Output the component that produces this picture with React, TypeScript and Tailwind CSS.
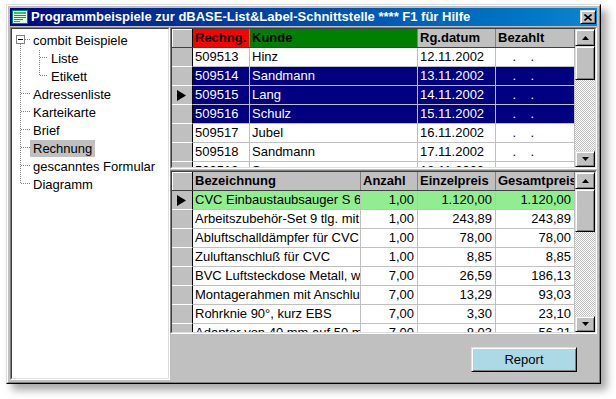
import React from "react";

const font = "font-['Liberation_Sans',Arial,sans-serif]";

type Col = { w: string; head: string; headBg?: string; right?: boolean };

const upperCols: Col[] = [
  { w: "w-[57px]", head: "Rechng.", headBg: "bg-[#ff0000]" },
  { w: "w-[168px]", head: "Kunde", headBg: "bg-[#008000]" },
  { w: "w-[78px]", head: "Rg.datum" },
  { w: "w-[79px]", head: "Bezahlt" },
];

const upperRows = [
  { cells: ["509513", "Hinz", "12.11.2002", "    .    ."] },
  { cells: ["509514", "Sandmann", "13.11.2002", "    .    ."], sel: true },
  { cells: ["509515", "Lang", "14.11.2002", "    .    ."], sel: true, cur: true },
  { cells: ["509516", "Schulz", "15.11.2002", "    .    ."], sel: true },
  { cells: ["509517", "Jubel", "16.11.2002", "    .    ."] },
  { cells: ["509518", "Sandmann", "17.11.2002", "    .    ."] },
  { cells: ["509519", "Sauer", "18.11.2002", "    .    ."] },
];

const lowerCols: Col[] = [
  { w: "w-[168px]", head: "Bezeichnung" },
  { w: "w-[57px]", head: "Anzahl", right: true },
  { w: "w-[78px]", head: "Einzelpreis", right: true },
  { w: "w-[79px]", head: "Gesamtpreis", right: true },
];

const lowerRows = [
  { cells: ["CVC Einbaustaubsauger S 6", "1,00", "1.120,00", "1.120,00"], green: true, cur: true },
  { cells: ["Arbeitszubehör-Set 9 tlg. mit", "1,00", "243,89", "243,89"] },
  { cells: ["Abluftschalldämpfer für CVC", "1,00", "78,00", "78,00"] },
  { cells: ["Zuluftanschluß für CVC", "1,00", "8,85", "8,85"] },
  { cells: ["BVC Luftsteckdose Metall, w", "7,00", "26,59", "186,13"] },
  { cells: ["Montagerahmen mit Anschlu", "7,00", "13,29", "93,03"] },
  { cells: ["Rohrknie 90°, kurz EBS", "7,00", "3,30", "23,10"] },
  { cells: ["Adapter von 40 mm auf 50 m", "7,00", "8,03", "56,21"] },
];

const tree = [
  { label: "combit Beispiele", child: false },
  { label: "Liste", child: true },
  { label: "Etikett", child: true },
  { label: "Adressenliste", child: false },
  { label: "Karteikarte", child: false },
  { label: "Brief", child: false },
  { label: "Rechnung", child: false, sel: true },
  { label: "gescanntes Formular", child: false },
  { label: "Diagramm", child: false },
];

const raised =
  "border border-t-[#dfdfdf] border-l-[#dfdfdf] border-r-black border-b-black shadow-[inset_1px_1px_#ffffff,inset_-1px_-1px_#808080]";

function Sunken({ className, children }: { className: string; children: React.ReactNode }) {
  return (
    <div className={`border border-t-[#808080] border-l-[#808080] border-r-white border-b-white ${className}`}>
      <div className="h-full w-full border border-t-[#404040] border-l-[#404040] border-r-[#dfdfdf] border-b-[#dfdfdf]">
        {children}
      </div>
    </div>
  );
}

function Arrow({ up }: { up?: boolean }) {
  return (
    <svg width="7" height="4" viewBox="0 0 7 4">
      <polygon points={up ? "3.5,0 7,4 0,4" : "0,0 7,0 3.5,4"} fill="black" />
    </svg>
  );
}

function Pointer() {
  return (
    <svg width="9" height="11" viewBox="0 0 9 11">
      <polygon points="0,0 9,5.5 0,11" fill="black" />
    </svg>
  );
}

function Scrollbar({ thumb }: { thumb: string }) {
  return (
    <div className="flex w-[20px] shrink-0 flex-col">
      <div className={`flex h-[17px] items-center justify-center bg-[#c0c0c0] ${raised}`}>
        <Arrow up />
      </div>
      <div className={`${thumb} bg-[#c0c0c0] ${raised}`} />
      <div className="flex-1 bg-[repeating-conic-gradient(#c0c0c0_0_25%,#ffffff_0_50%)] bg-[length:2px_2px]" />
      <div className={`flex h-[16px] items-center justify-center bg-[#c0c0c0] ${raised}`}>
        <Arrow />
      </div>
    </div>
  );
}

type Row = { cells: string[]; sel?: boolean; cur?: boolean; green?: boolean };

function Grid({ cols, rows, thumb, height }: { cols: Col[]; rows: Row[]; thumb: string; height: string }) {
  return (
    <Sunken className={`${height} w-[427px]`}>
      <div className="flex h-full bg-white">
        <div className="w-[403px] overflow-hidden">
          <div className="flex h-[19px] border-b border-b-[#404040] bg-[#c0c0c0]">
            <div className="w-[21px] shrink-0 border-r border-r-black shadow-[inset_1px_1px_#ffffff]" />
            {cols.map((c) => (
              <div
                key={c.head}
                className={`${c.w} shrink-0 overflow-hidden whitespace-nowrap border-r border-r-[#808080] px-[2px] font-bold leading-[18px] ${c.headBg ?? "bg-[#c0c0c0]"}`}
              >
                {c.head}
              </div>
            ))}
          </div>
          {rows.map((r, i) => (
            <div key={i} className="flex h-[19px]">
              <div className="flex w-[21px] shrink-0 items-center border-r border-b border-r-black border-b-white bg-[#c0c0c0] pl-[5px]">
                {r.cur ? <Pointer /> : null}
              </div>
              {cols.map((c, j) => (
                <div
                  key={j}
                  className={`${c.w} shrink-0 overflow-hidden whitespace-pre border-r border-b border-[#c0c0c0] leading-[18px] ${
                    c.right ? "pr-[3px] text-right" : "pl-[2px]"
                  } ${r.sel ? "bg-[#000080] text-white" : r.green ? "bg-[#90ee90]" : "bg-white"}`}
                >
                  {r.cells[j]}
                </div>
              ))}
            </div>
          ))}
        </div>
        <Scrollbar thumb={thumb} />
      </div>
    </Sunken>
  );
}

function TreeLines() {
  const stubs = [3, 4, 5, 6, 7, 8].map((i) => 10.5 + 18 * i);
  return (
    <svg className="pointer-events-none absolute left-0 top-0" width="40" height="170" shapeRendering="crispEdges">
      <g stroke="#808080" strokeDasharray="1 1" fill="none">
        <line x1="8.5" y1="15" x2="8.5" y2="155" />
        <line x1="13" y1="10.5" x2="18" y2="10.5" />
        {stubs.map((y) => (
          <line key={y} x1="9" y1={y} x2="18" y2={y} />
        ))}
        <line x1="27.5" y1="21" x2="27.5" y2="47" />
        <line x1="28" y1="28.5" x2="36" y2="28.5" />
        <line x1="28" y1="46.5" x2="36" y2="46.5" />
      </g>
      <rect x="4.5" y="6.5" width="8" height="8" fill="white" stroke="#808080" />
      <line x1="6" y1="10.5" x2="11" y2="10.5" stroke="black" />
    </svg>
  );
}

function AppIcon() {
  return (
    <svg width="16" height="14" viewBox="0 0 16 14">
      <rect x="0" y="0" width="16" height="14" fill="#008080" />
      <rect x="1" y="1" width="14" height="12" fill="#e0ffe0" />
      <rect x="2" y="2" width="12" height="2" fill="#40c060" />
      <rect x="2" y="5" width="12" height="1" fill="#00a040" />
      <rect x="2" y="7" width="12" height="1" fill="#00a040" />
      <rect x="2" y="9" width="9" height="1" fill="#00a040" />
      <rect x="2" y="11" width="6" height="1" fill="#808080" />
    </svg>
  );
}

export default function App() {
  return (
    <div className={`min-h-screen bg-white pl-[6px] pt-[4px] text-[13px] text-black ${font}`}>
      <div className="h-[380px] w-[595px] border border-t-[#dfdfdf] border-l-[#dfdfdf] border-r-black border-b-black shadow-[6px_6px_8px_rgba(0,0,0,0.35)]">
        <div className="flex h-full flex-col border border-t-white border-l-white border-r-[#808080] border-b-[#808080] bg-[#c0c0c0] p-[2px]">
          <div className="flex h-[18px] items-center bg-gradient-to-r from-[#000080] to-[#1084d0] pl-[2px] pr-[1px]">
            <AppIcon />
            <span className="ml-[3px] flex-1 whitespace-nowrap text-[13px] font-bold leading-[18px] text-white">
              Programmbeispiele zur dBASE-List&amp;Label-Schnittstelle **** F1 für Hilfe
            </span>
            <div className={`flex h-[14px] w-[16px] items-center justify-center bg-[#c0c0c0] ${raised}`}>
              <svg width="8" height="7" viewBox="0 0 8 7">
                <path d="M0.5 0.5 L7.5 6.5 M7.5 0.5 L0.5 6.5" stroke="black" strokeWidth="1.6" />
              </svg>
            </div>
          </div>

          <div className="mt-[1px] flex flex-1">
            <Sunken className="h-full w-[160px]">
              <div className="relative h-full bg-white pt-[2px]">
                <TreeLines />
                {tree.map((t) => (
                  <div key={t.label} className="flex h-[18px] items-center">
                    <span
                      className={`${t.child ? "ml-[36px]" : "ml-[18px]"} px-[3px] leading-[17px] ${
                        t.sel ? "bg-[#c0c0c0]" : ""
                      }`}
                    >
                      {t.label}
                    </span>
                  </div>
                ))}
              </div>
            </Sunken>

            <div className="flex flex-1 flex-col">
              <Grid cols={upperCols} rows={upperRows} thumb="h-[34px]" height="h-[142px]" />
              <div className="mt-[1px]">
                <Grid cols={lowerCols} rows={lowerRows} thumb="h-[43px]" height="h-[164px]" />
              </div>
              <div className="flex justify-end pr-[20px] pt-[13px]">
                <button
                  className={`h-[25px] w-[106px] bg-[#add8e6] text-[13px] ${raised}`}
                >
                  Report
                </button>
              </div>
            </div>
          </div>
        </div>
      </div>
    </div>
  );
}
